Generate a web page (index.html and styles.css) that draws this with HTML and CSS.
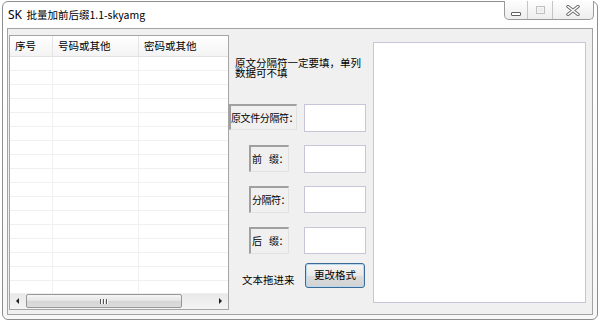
FILE: index.html
```html
<!DOCTYPE html>
<html>
<head>
<meta charset="utf-8">
<link rel="stylesheet" href="styles.css">
</head>
<body>
<div class="window">
  <div class="titlebar">
    <div class="title"><span class="sk">SK</span> 批量加前后缀1.1-skyamg</div>
    <div class="caption">
      <div class="cbtn min"><span class="min-bar"></span></div>
      <div class="cbtn max"><span class="max-box"></span></div>
      <div class="cbtn close">
        <svg width="14" height="11" viewBox="0 0 14 11">
          <path d="M2 1.5 L12 9.5 M12 1.5 L2 9.5" stroke="#6a6a6a" stroke-width="3.4" stroke-linecap="round" fill="none"/>
          <path d="M2 1.5 L12 9.5 M12 1.5 L2 9.5" stroke="#ffffff" stroke-width="1.6" stroke-linecap="round" fill="none"/>
        </svg>
      </div>
    </div>
  </div>
  <div class="client">
    <div class="grid">
      <div class="ghead">
        <div class="c1">序号</div>
        <div class="c2">号码或其他</div>
        <div class="c3">密码或其他</div>
      </div>
      <div class="gbody">
        <div class="grow"><div class="c1"></div><div class="c2"></div><div class="c3"></div></div>
        <div class="grow"><div class="c1"></div><div class="c2"></div><div class="c3"></div></div>
        <div class="grow"><div class="c1"></div><div class="c2"></div><div class="c3"></div></div>
        <div class="grow"><div class="c1"></div><div class="c2"></div><div class="c3"></div></div>
        <div class="grow"><div class="c1"></div><div class="c2"></div><div class="c3"></div></div>
        <div class="grow"><div class="c1"></div><div class="c2"></div><div class="c3"></div></div>
        <div class="grow"><div class="c1"></div><div class="c2"></div><div class="c3"></div></div>
        <div class="grow"><div class="c1"></div><div class="c2"></div><div class="c3"></div></div>
        <div class="grow"><div class="c1"></div><div class="c2"></div><div class="c3"></div></div>
        <div class="grow"><div class="c1"></div><div class="c2"></div><div class="c3"></div></div>
        <div class="grow"><div class="c1"></div><div class="c2"></div><div class="c3"></div></div>
        <div class="grow"><div class="c1"></div><div class="c2"></div><div class="c3"></div></div>
        <div class="grow"><div class="c1"></div><div class="c2"></div><div class="c3"></div></div>
        <div class="grow"><div class="c1"></div><div class="c2"></div><div class="c3"></div></div>
        <div class="grow"><div class="c1"></div><div class="c2"></div><div class="c3"></div></div>
        <div class="grow"><div class="c1"></div><div class="c2"></div><div class="c3"></div></div>
        <div class="grow"><div class="c1"></div><div class="c2"></div><div class="c3"></div></div>
      </div>
      <div class="hscroll">
        <span class="arr left"></span>
        <div class="track">
          <div class="thumb"><span class="grip"></span><span class="grip"></span><span class="grip"></span></div>
        </div>
        <span class="arr right"></span>
      </div>
    </div>
    <div class="middle">
      <div class="note">原文分隔符一定要填，单列数据可不填</div>
      <div class="row first">
        <div class="lbl wide">原文件分隔符：</div>
        <div class="input tall"></div>
      </div>
      <div class="row">
        <div class="lbl narrow"><span>前</span><span>缀：</span></div>
        <div class="input tall"></div>
      </div>
      <div class="row">
        <div class="lbl narrow"><span>分隔符：</span></div>
        <div class="input"></div>
      </div>
      <div class="row">
        <div class="lbl narrow"><span>后</span><span>缀：</span></div>
        <div class="input"></div>
      </div>
      <div class="row bottom">
        <div class="drop">文本拖进来</div>
        <div class="btn">更改格式</div>
      </div>
    </div>
    <div class="textarea"></div>
  </div>
</div>
</body>
</html>
```
FILE: styles.css
```css
* { box-sizing: border-box; }
html, body {
  margin: 0;
  padding: 0;
  background: #ffffff;
  width: 600px;
  height: 321px;
  overflow: hidden;
  font-family: "Noto Sans CJK SC", "Noto Sans", sans-serif;
  font-size: 10.5px;
  color: #000;
}
.window {
  margin: 1px 2px 0 2px;
  width: 596px;
  height: 319px;
  border: 1px solid #8e8e8e;
  border-radius: 6px;
  background: linear-gradient(#ffffff, #f7f7f7);
  display: flex;
  flex-direction: column;
}
.titlebar {
  height: 26px;
  display: flex;
  justify-content: space-between;
  align-items: flex-start;
  flex: none;
}
.title {
  padding-left: 5px;
  line-height: 26px;
  font-size: 10.5px;
  white-space: nowrap;
}
.title .sk {
  font-size: 12px;
  font-family: "Noto Sans", sans-serif;
  margin-right: 2px;
}
.caption {
  display: flex;
  margin-right: 3px;
  margin-top: -1px;
  height: 19px;
  border: 1px solid #9a9a9a;
  border-top: none;
  border-radius: 0 0 5px 5px;
  background: linear-gradient(#fdfdfd, #eeeeee);
  overflow: hidden;
}
.cbtn {
  height: 100%;
  display: flex;
  align-items: center;
  justify-content: center;
}
.cbtn.min { width: 23px; border-right: 1px solid #c4c4c4; }
.cbtn.max { width: 25px; border-right: 1px solid #c4c4c4; }
.cbtn.close { width: 40px; }
.min-bar {
  width: 10px;
  height: 4px;
  margin-top: 7px;
  border: 1px solid #606060;
  background: #fff;
  border-radius: 1px;
}
.max-box {
  width: 9px;
  height: 8px;
  border: 1px solid #c0c0c0;
  box-shadow: inset 0 0 0 1px #f5f5f5;
  background: #ededed;
}
.client {
  margin: 0 4px 0 4px;
  height: 287px;
  border: 1px solid #a3a3a3;
  background: #f0f0f0;
  display: flex;
  align-items: flex-start;
}
.grid {
  margin-top: 6px;
  margin-left: 1px;
  width: 220px;
  height: 275px;
  border: 1px solid #a5a5a5;
  background: #fff;
  display: flex;
  flex-direction: column;
  flex: none;
}
.ghead {
  height: 21px;
  display: flex;
  background: linear-gradient(#ffffff, #f3f3f3);
  border-bottom: 1px solid #e2e2e2;
  flex: none;
}
.ghead > div {
  line-height: 20px;
  padding-left: 5px;
  border-right: 1px solid #e4e4e4;
}
.c1 { width: 43px; flex: none; }
.c2 { width: 86px; flex: none; }
.c3 { flex: 1; }
.ghead .c3 { border-right: none; }
.gbody {
  flex: 1;
  overflow: hidden;
}
.grow {
  height: 14px;
  display: flex;
  border-bottom: 1px solid #f0f0f0;
}
.grow > div { border-right: 1px solid #f0f0f0; }
.grow .c3 { border-right: none; }
.hscroll {
  height: 16px;
  flex: none;
  display: flex;
  align-items: center;
  background: linear-gradient(#e9e9e9, #f4f4f4);
  border-top: 1px solid #eeeeee;
  padding: 0 0 1px 0;
}
.arr {
  width: 16px;
  flex: none;
  height: 14px;
  position: relative;
}
.arr.left::after, .arr.right::after {
  content: "";
  position: absolute;
  top: 4px;
  width: 0;
  height: 0;
  border-top: 3px solid transparent;
  border-bottom: 3px solid transparent;
}
.arr.left::after { left: 6px; border-right: 3px solid #202020; }
.arr.right::after { left: 7px; border-left: 3px solid #202020; }
.track {
  flex: 1;
  height: 14px;
  display: flex;
  align-items: stretch;
}
.thumb {
  width: 156px;
  height: 14px;
  border: 1px solid #979797;
  border-radius: 2px;
  background: linear-gradient(#f6f6f6, #e4e4e4 50%, #d6d6d6 51%, #dcdcdc);
  display: flex;
  justify-content: center;
  align-items: center;
  gap: 1px;
}
.grip {
  width: 1px;
  height: 5px;
  background: #555;
  box-shadow: 1px 0 0 #fff;
  margin-right: 1px;
}
.middle {
  width: 137px;
  flex: none;
  display: flex;
  flex-direction: column;
}
.note {
  margin-top: 28px;
  padding-left: 6px;
  width: 137px;
  line-height: 10px;
  height: 22px;
  padding-top: 1px;
}
.row {
  display: flex;
  align-items: flex-start;
  height: 28px;
  margin-top: 13px;
}
.row.first { margin-top: 25px; }
.lbl {
  height: 27px;
  background: #f0f0f0;
  border-top: 2px solid #a0a0a0;
  border-left: 2px solid #a0a0a0;
  border-right: 1px solid #e2e2e2;
  border-bottom: 1px solid #e2e2e2;
  line-height: 24px;
  white-space: nowrap;
  font-size: 10px;
  flex: none;
}
.lbl.wide {
  width: 68px;
  height: 26px;
  margin-right: 7px;
  padding-left: 0;
  letter-spacing: -0.4px;
}
.lbl.narrow {
  width: 40px;
  margin-left: 20px;
  margin-right: 15px;
  padding: 0 0 0 1px;
  display: flex;
  justify-content: space-between;
  letter-spacing: -0.5px;
}
.input {
  width: 62px;
  height: 27px;
  background: #fff;
  border: 1px solid #c6c6d8;
  flex: none;
}
.input.tall { height: 28px; }
.row.bottom {
  margin-top: 8px;
  height: 26px;
  align-items: flex-end;
}
.drop {
  padding-left: 13px;
  width: 76px;
  line-height: 14px;
  margin-bottom: 2px;
}
.btn {
  width: 60px;
  height: 25px;
  margin-left: 0;
  align-self: flex-start;
  border: 1px solid #3c6a96;
  border-radius: 3px;
  background: linear-gradient(#f6f6f6, #e9e9e9 50%, #dcdcdc 51%, #d2d2d2);
  box-shadow: inset 0 0 0 1px #b8d8f0;
  text-align: center;
  line-height: 22px;
}
.textarea {
  margin-top: 13px;
  margin-left: 7px;
  width: 213px;
  height: 261px;
  background: #fff;
  border: 1px solid #c6c6d8;
  flex: none;
}
```
